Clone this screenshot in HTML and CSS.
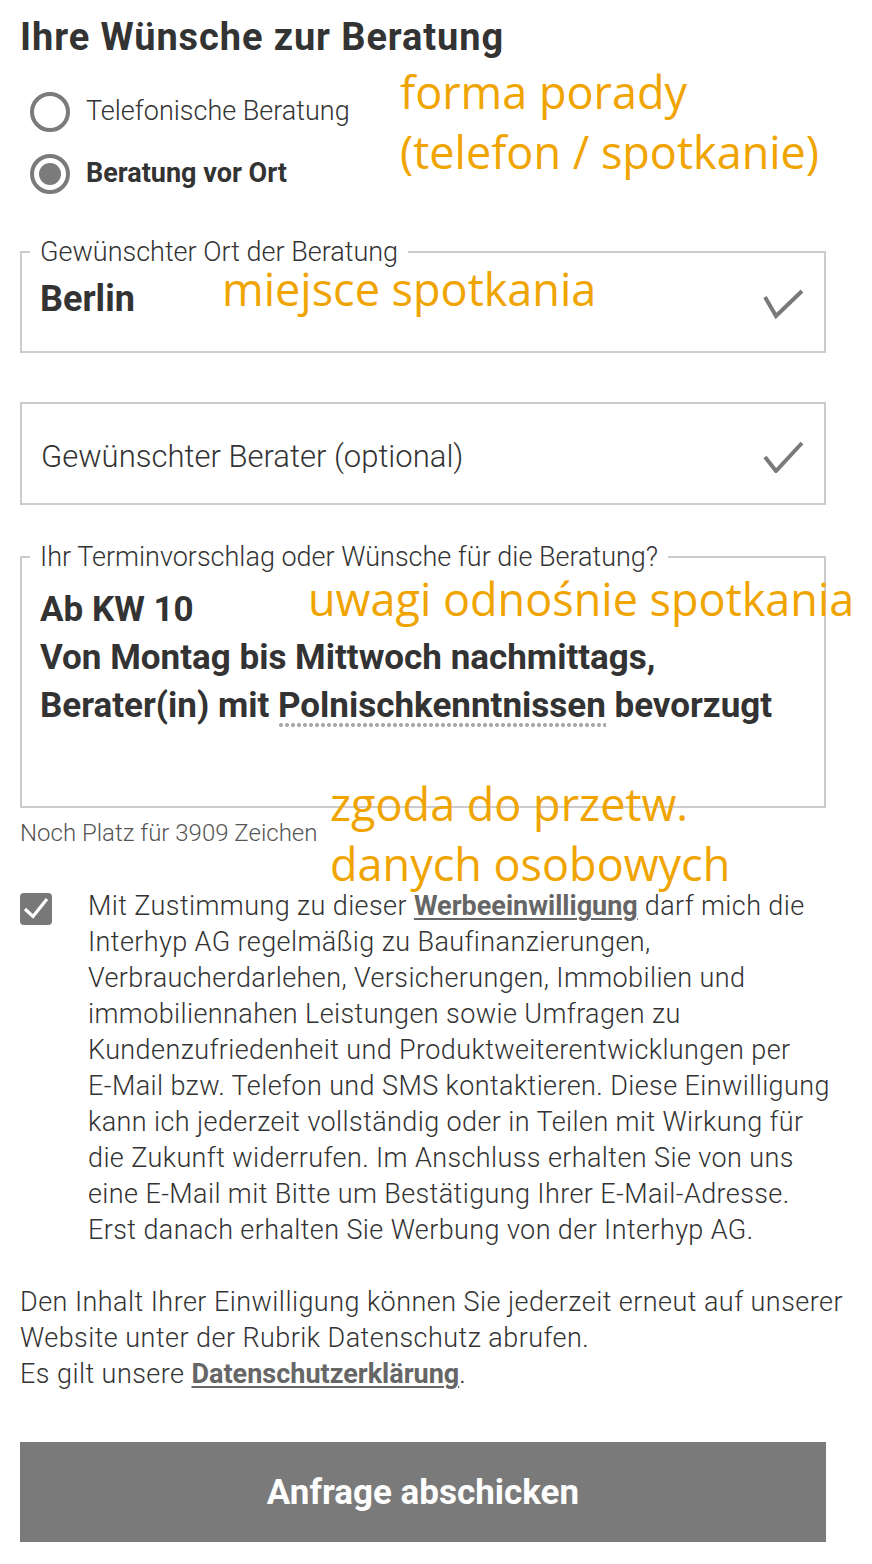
FILE: index.html
```html
<!DOCTYPE html>
<html lang="de">
<head>
<meta charset="utf-8">
<title>Ihre Wünsche zur Beratung</title>
<link rel="stylesheet" href="styles.css">
</head>
<body>
<div class="page">
  <h1 class="title">Ihre Wünsche zur Beratung</h1>

  <div class="radios">
    <label class="radio-row">
      <span class="radio"></span>
      <span class="radio-label">Telefonische Beratung</span>
    </label>
    <label class="radio-row">
      <span class="radio radio-checked"></span>
      <span class="radio-label radio-label-bold">Beratung vor Ort</span>
    </label>
  </div>

  <fieldset class="field field-place">
    <legend class="legend">Gewünschter Ort der Beratung</legend>
    <div class="field-row">
      <span class="field-value">Berlin</span>
      <svg class="tick tick-place" width="42" height="32" viewBox="0 0 42 32"><polyline points="3,9 14,28 40,3" fill="none" stroke="#7a7a7a" stroke-width="4"/></svg>
    </div>
  </fieldset>

  <div class="field field-plain">
    <span class="field-placeholder">Gewünschter Berater (optional)</span>
    <svg class="tick" width="42" height="32" viewBox="0 0 42 32"><polyline points="3,16 14,30 40,2" fill="none" stroke="#7a7a7a" stroke-width="4"/></svg>
  </div>

  <fieldset class="field field-notes">
    <legend class="legend">Ihr Terminvorschlag oder Wünsche für die Beratung?</legend>
    <div class="notes">Ab KW 10<br>Von Montag bis Mittwoch nachmittags,<br>Berater(in) mit <span class="spell">Polnischkenntnissen</span> bevorzugt</div>
  </fieldset>
  <p class="counter">Noch Platz für 3909 Zeichen</p>

  <div class="consent">
    <span class="checkbox">
      <svg width="32" height="32" viewBox="0 0 32 32"><polyline points="5,16 13,23.5 27,6" fill="none" stroke="#ffffff" stroke-width="3.2"/></svg>
    </span>
    <p class="consent-text">Mit Zustimmung zu dieser <a class="link" href="#">Werbeeinwilligung</a> darf mich die<br>Interhyp AG regelmäßig zu Baufinanzierungen,<br>Verbraucherdarlehen, Versicherungen, Immobilien und<br>immobiliennahen Leistungen sowie Umfragen zu<br>Kundenzufriedenheit und Produktweiterentwicklungen per<br>E-Mail bzw. Telefon und SMS kontaktieren. Diese Einwilligung<br>kann ich jederzeit vollständig oder in Teilen mit Wirkung für<br>die Zukunft widerrufen. Im Anschluss erhalten Sie von uns<br>eine E-Mail mit Bitte um Bestätigung Ihrer E-Mail-Adresse.<br>Erst danach erhalten Sie Werbung von der Interhyp AG.</p>
  </div>

  <p class="info">Den Inhalt Ihrer Einwilligung können Sie jederzeit erneut auf unserer<br>Website unter der Rubrik Datenschutz abrufen.<br>Es gilt unsere <a class="link" href="#">Datenschutzerklärung</a>.</p>

  <button class="submit" type="button">Anfrage abschicken</button>

  <div class="note note-form">forma porady<br>(telefon / spotkanie)</div>
  <div class="note note-place">miejsce spotkania</div>
  <div class="note note-notes">uwagi odnośnie spotkania</div>
  <div class="note note-consent">zgoda do przetw.<br>danych osobowych</div>
</div>
</body>
</html>
```

FILE: styles.css
```css
* { box-sizing: border-box; }

html, body {
  margin: 0;
  padding: 0;
  background: #ffffff;
}

.page {
  position: relative;
  padding: 16px 20px 30px 20px;
  font-family: Roboto, "Liberation Sans", sans-serif;
  font-weight: 300;
  color: #333333;
}

.title {
  margin: 0;
  font-size: 38px;
  line-height: 42px;
  letter-spacing: 0.9px;
  font-weight: 700;
  color: #333333;
}

.radios {
  margin-top: 34px;
  display: flex;
  flex-direction: column;
  gap: 22px;
}

.radio-row {
  display: flex;
  align-items: center;
  gap: 16px;
  margin-left: 10px;
}

.radio {
  width: 40px;
  height: 40px;
  border: 4px solid #7b7b7b;
  border-radius: 50%;
  display: flex;
  align-items: center;
  justify-content: center;
  flex: none;
}

.radio-checked::after {
  content: "";
  width: 22px;
  height: 22px;
  border-radius: 50%;
  background: #7b7b7b;
}

.radio-label {
  font-size: 27px;
  line-height: 32px;
  margin-top: -3px;
}

.radio-label-bold {
  font-weight: 700;
}

.field {
  width: 806px;
  margin: 0;
  border: 2px solid #cccccc;
  min-width: 0;
}

fieldset.field {
  padding: 0 20px 0 18px;
}

.legend {
  font-size: 27px;
  line-height: 30px;
  padding: 0 10px;
  margin-left: -10px;
  color: #333333;
}

.field-place {
  margin-top: 43px;
  padding-bottom: 31px !important;
}

.field-row {
  display: flex;
  justify-content: space-between;
  align-items: flex-start;
  padding-top: 12px;
}

.field-value {
  font-size: 36px;
  line-height: 40px;
  font-weight: 700;
}

.tick {
  flex: none;
  display: block;
}

.tick-place {
  margin-top: 9px;
}

.field-plain {
  margin-top: 49px;
  height: 103px;
  display: flex;
  align-items: center;
  justify-content: space-between;
  padding: 6px 20px 0 19px;
}

.field-placeholder {
  font-size: 31px;
  line-height: 36px;
}

.field-notes {
  margin-top: 37px;
  padding-bottom: 76px !important;
}

.notes {
  padding-top: 14px;
  font-size: 35px;
  line-height: 48px;
  font-weight: 700;
}

.spell {
  padding-bottom: 1px;
  background-image: radial-gradient(circle at 3px 2px, #aaaaaa 1.8px, transparent 2.3px);
  background-size: 6px 4px;
  background-repeat: repeat-x;
  background-position: 0 100%;
}

.counter {
  margin: 12px 0 0 0;
  font-size: 24px;
  line-height: 26px;
  color: #555555;
}

.consent {
  margin-top: 42px;
  display: flex;
  align-items: flex-start;
  gap: 36px;
}

.checkbox {
  flex: none;
  width: 32px;
  height: 32px;
  margin-top: 5px;
  border-radius: 4px;
  background: #787878;
  display: block;
}

.checkbox svg {
  display: block;
}

.consent-text {
  margin: 0;
  font-size: 27px;
  line-height: 36px;
  letter-spacing: 0.4px;
  white-space: nowrap;
}

.link {
  color: #666666;
  font-weight: 700;
  letter-spacing: 0;
  text-decoration: underline;
  text-decoration-thickness: 2px;
  text-underline-offset: 3px;
}

.info {
  margin: 36px 0 0 0;
  font-size: 27px;
  line-height: 36px;
  letter-spacing: 0.45px;
  white-space: nowrap;
}

.submit {
  display: block;
  margin-top: 50px;
  width: 806px;
  height: 100px;
  border: none;
  background: #7a7a7a;
  color: #ffffff;
  font-family: Roboto, "Liberation Sans", sans-serif;
  font-size: 35px;
  font-weight: 700;
  padding: 0;
}

.note {
  position: absolute;
  font-family: "Open Sans", "Noto Sans", sans-serif;
  font-size: 45px;
  line-height: 60px;
  font-weight: 400;
  color: #f0a400;
  white-space: nowrap;
}

.note-form { left: 400px; top: 62px; }
.note-place { left: 222px; top: 259px; }
.note-notes { left: 308px; top: 569px; }
.note-consent { left: 330px; top: 774px; }
```
